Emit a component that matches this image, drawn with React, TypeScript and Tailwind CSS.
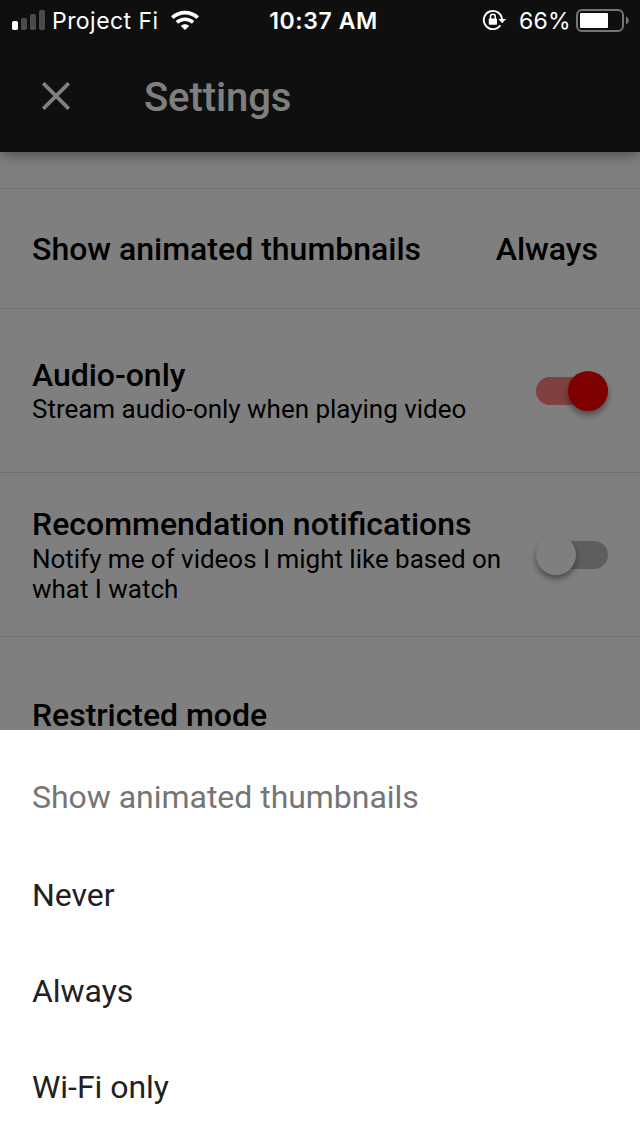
import React from 'react';

interface ToggleProps {
  on: boolean;
}

const Toggle: React.FC<ToggleProps> = ({ on }) => (
  <button
    role="switch"
    aria-checked={on}
    className={`relative h-7 w-[72px] shrink-0 rounded-full ${on ? 'bg-[#ff8080]' : 'bg-[#bdbdbd]'}`}
  >
    <span
      className={`absolute -top-1.5 h-10 w-10 rounded-full shadow-[0_4px_6px_rgba(0,0,0,0.4)] ${
        on ? 'right-0 bg-[#ff0000]' : 'left-0 bg-white'
      }`}
    />
  </button>
);

const StatusBar: React.FC = () => (
  <div className="grid h-10 grid-cols-3 items-center font-['Inter',sans-serif] text-white">
    <div className="flex items-center pl-3">
      <svg width="33" height="20" viewBox="0 0 33 20" aria-hidden="true">
        <rect x="0" y="11" width="6" height="9" rx="1.8" fill="#fff" />
        <rect x="9" y="8" width="6" height="12" rx="1.8" fill="#4b4b4b" />
        <rect x="18" y="4" width="6" height="16" rx="1.8" fill="#4b4b4b" />
        <rect x="27" y="0" width="6" height="20" rx="1.8" fill="#4b4b4b" />
      </svg>
      <span className="ml-[7px] w-[107px] whitespace-nowrap pt-0.5 text-[23px] tracking-[0.45px]">Project Fi</span>
      <svg className="ml-3" width="28" height="20" viewBox="0 0 28 20" fill="none" aria-hidden="true">
        <path d="M1.3 7.6C8.6 .9 19.4 .9 26.7 7.6" stroke="#fff" strokeWidth="3.8" />
        <path d="M5.9 12.3C10.6 8.2 17.4 8.2 22.1 12.3" stroke="#fff" strokeWidth="3.6" />
        <path d="M14 20L9.8 15.9C12.2 13.8 15.8 13.8 18.2 15.9Z" fill="#fff" />
      </svg>
    </div>
    <div className="whitespace-nowrap pl-[7px] pt-0.5 text-center text-[23px] font-semibold tracking-[0.6px]">10:37 AM</div>
    <div className="flex items-center justify-end pr-[11px]">
      <svg width="24" height="22" viewBox="0 0 24 22" fill="none" aria-hidden="true">
        <path d="M18.4 16.2A9.1 9.1 0 1 1 20 10.5" stroke="#fff" strokeWidth="1.9" />
        <path d="M16.4 10H24L20.2 14.2Z" fill="#fff" />
        <rect x="6.8" y="9.4" width="8.2" height="6.4" rx="0.8" fill="#fff" />
        <path d="M8.5 10V7.7a2.4 2.4 0 0 1 4.8 0V10" stroke="#fff" strokeWidth="1.5" />
      </svg>
      <span className="ml-[13px] w-[51px] whitespace-nowrap pt-0.5 text-[23px] tracking-[0.2px]">66%</span>
      <svg className="ml-[6px]" width="53" height="24" viewBox="0 0 53 24" fill="none" aria-hidden="true">
        <rect x="1" y="2" width="46" height="21" rx="5" stroke="#757575" strokeWidth="2" />
        <rect x="4" y="5" width="28" height="15" rx="1" fill="#fff" />
        <path d="M50 8.5C53.7 10 53.7 15 50 16.5Z" fill="#757575" />
      </svg>
    </div>
  </div>
);

const options = ['Never', 'Always', 'Wi-Fi only'];

export default function App() {
  return (
    <div className="relative flex h-[1136px] w-[640px] flex-col overflow-hidden bg-white font-[Roboto,sans-serif] text-black">
      <header className="relative h-[152px] shrink-0 bg-[#1e1e1e] pt-10 shadow-[0_2px_14px_rgba(0,0,0,0.45)]">
        <div className="flex h-28 items-center pl-[42px]">
          <svg width="28" height="28" viewBox="0 0 28 28" aria-label="Close">
            <path d="M1.2 1.2L26.8 26.8M26.8 1.2L1.2 26.8" stroke="#fff" strokeWidth="3.8" />
          </svg>
          <h1 className="ml-[74px] pt-[3px] text-[40px] font-medium leading-none tracking-[-0.1px] text-white">Settings</h1>
        </div>
      </header>

      <main className="flex flex-1 flex-col">
        <div className="h-[37px] border-b border-[#dedede]" />
        <section className="flex h-[120px] items-center justify-between border-b border-[#dedede] pl-8 pr-[42px] text-[32px] font-medium">
          <span>Show animated thumbnails</span>
          <span>Always</span>
        </section>
        <section className="flex h-[164px] items-center justify-between border-b border-[#dedede] px-8">
          <div className="pb-0.5">
            <h2 className="text-[32px] font-medium leading-[38px] tracking-[-0.05px]">Audio-only</h2>
            <p className="text-[26px] leading-[30px] tracking-[-0.02px]">Stream audio-only when playing video</p>
          </div>
          <Toggle on />
        </section>
        <section className="flex h-[164px] items-center justify-between border-b border-[#dedede] px-8">
          <div>
            <h2 className="-mt-px mb-px text-[32px] font-medium leading-[38px]">Recommendation notifications</h2>
            <p className="text-[26px] leading-[30px] tracking-[-0.02px]">
              Notify me of videos I might like based on
              <br />
              what I watch
            </p>
          </div>
          <Toggle on={false} />
        </section>
        <section className="px-8 pt-[59px]">
          <h2 className="text-[32px] font-medium leading-[38px] tracking-[-0.03px]">Restricted mode</h2>
        </section>
      </main>

      {/* Dimmed backdrop */}
      <div className="absolute inset-0 bg-black/50" />

      {/* Status bar stays bright over the backdrop */}
      <div className="absolute inset-x-0 top-0 z-10">
        <StatusBar />
      </div>

      {/* Bottom sheet */}
      <div className="absolute inset-x-0 bottom-0 z-10 h-[406px] bg-white px-8 pt-[19px] text-[32px] tracking-[-0.03px]">
        <div className="mb-0.5 flex h-24 items-center text-[#757575]">Show animated thumbnails</div>
        {options.map((option) => (
          <button key={option} className="flex h-24 w-full items-center text-[#212121]">
            {option}
          </button>
        ))}
      </div>
    </div>
  );
}
